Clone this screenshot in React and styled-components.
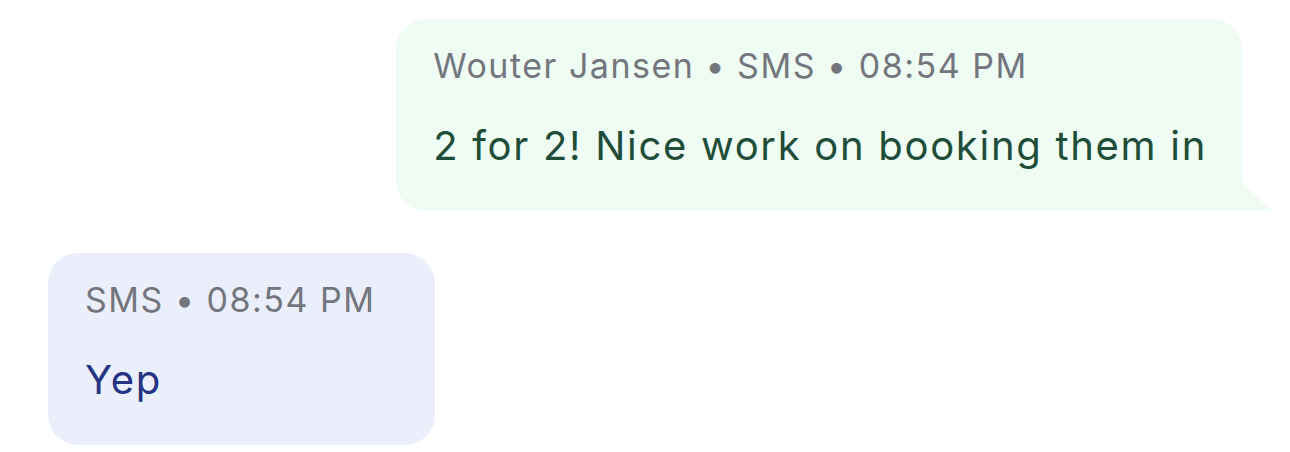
import React from "react";
import styled, { createGlobalStyle } from "styled-components";

const GlobalStyle = createGlobalStyle`
  html, body {
    margin: 0;
    padding: 0;
    background: #ffffff;
    font-family: Inter, "Noto Sans", sans-serif;
  }
`;

const Thread = styled.div`
  display: flex;
  flex-direction: column;
  gap: 42px;
  padding: 19px 48px 0;
`;

const Row = styled.div`
  display: flex;
  justify-content: ${(p) => (p.$outgoing ? "flex-end" : "flex-start")};
`;

const Bubble = styled.div`
  position: relative;
  box-sizing: border-box;
  min-width: ${(p) => (p.$outgoing ? "0" : "387px")};
  padding: 23px 35px 35px 37px;
  border-radius: ${(p) => (p.$outgoing ? "30px 30px 0 30px" : "30px")};
  background: ${(p) => (p.$outgoing ? "#eefcf4" : "#ebeefb")};
  display: flex;
  flex-direction: column;
  gap: 26px;
`;

// little tail bottom-right on outgoing messages
const Tail = styled.svg`
  position: absolute;
  right: -30px;
  bottom: 0;
  width: 30px;
  height: 28px;
  display: block;
`;

const Meta = styled.div`
  font-size: 34px;
  line-height: 48px;
  color: #74767d;
  letter-spacing: 1.5px;
  white-space: nowrap;
`;

const Text = styled.div`
  font-size: 40px;
  line-height: 60px;
  letter-spacing: 1.7px;
  color: ${(p) => (p.$outgoing ? "#1f4d3a" : "#243482")};
  white-space: nowrap;
`;

function Message({ outgoing, meta, text }) {
  return (
    <Row $outgoing={outgoing}>
      <Bubble $outgoing={outgoing}>
        <Meta>{meta.join(" • ")}</Meta>
        <Text $outgoing={outgoing}>{text}</Text>
        {outgoing && (
          <Tail viewBox="0 0 30 28">
            <path d="M0 0 L30 28 L0 28 Z" fill="#eefcf4" />
          </Tail>
        )}
      </Bubble>
    </Row>
  );
}

export default function App() {
  return (
    <>
      <GlobalStyle />
      <Thread>
        <Message
          outgoing
          meta={["Wouter Jansen", "SMS", "08:54 PM"]}
          text="2 for 2! Nice work on booking them in"
        />
        <Message meta={["SMS", "08:54 PM"]} text="Yep" />
      </Thread>
    </>
  );
}
